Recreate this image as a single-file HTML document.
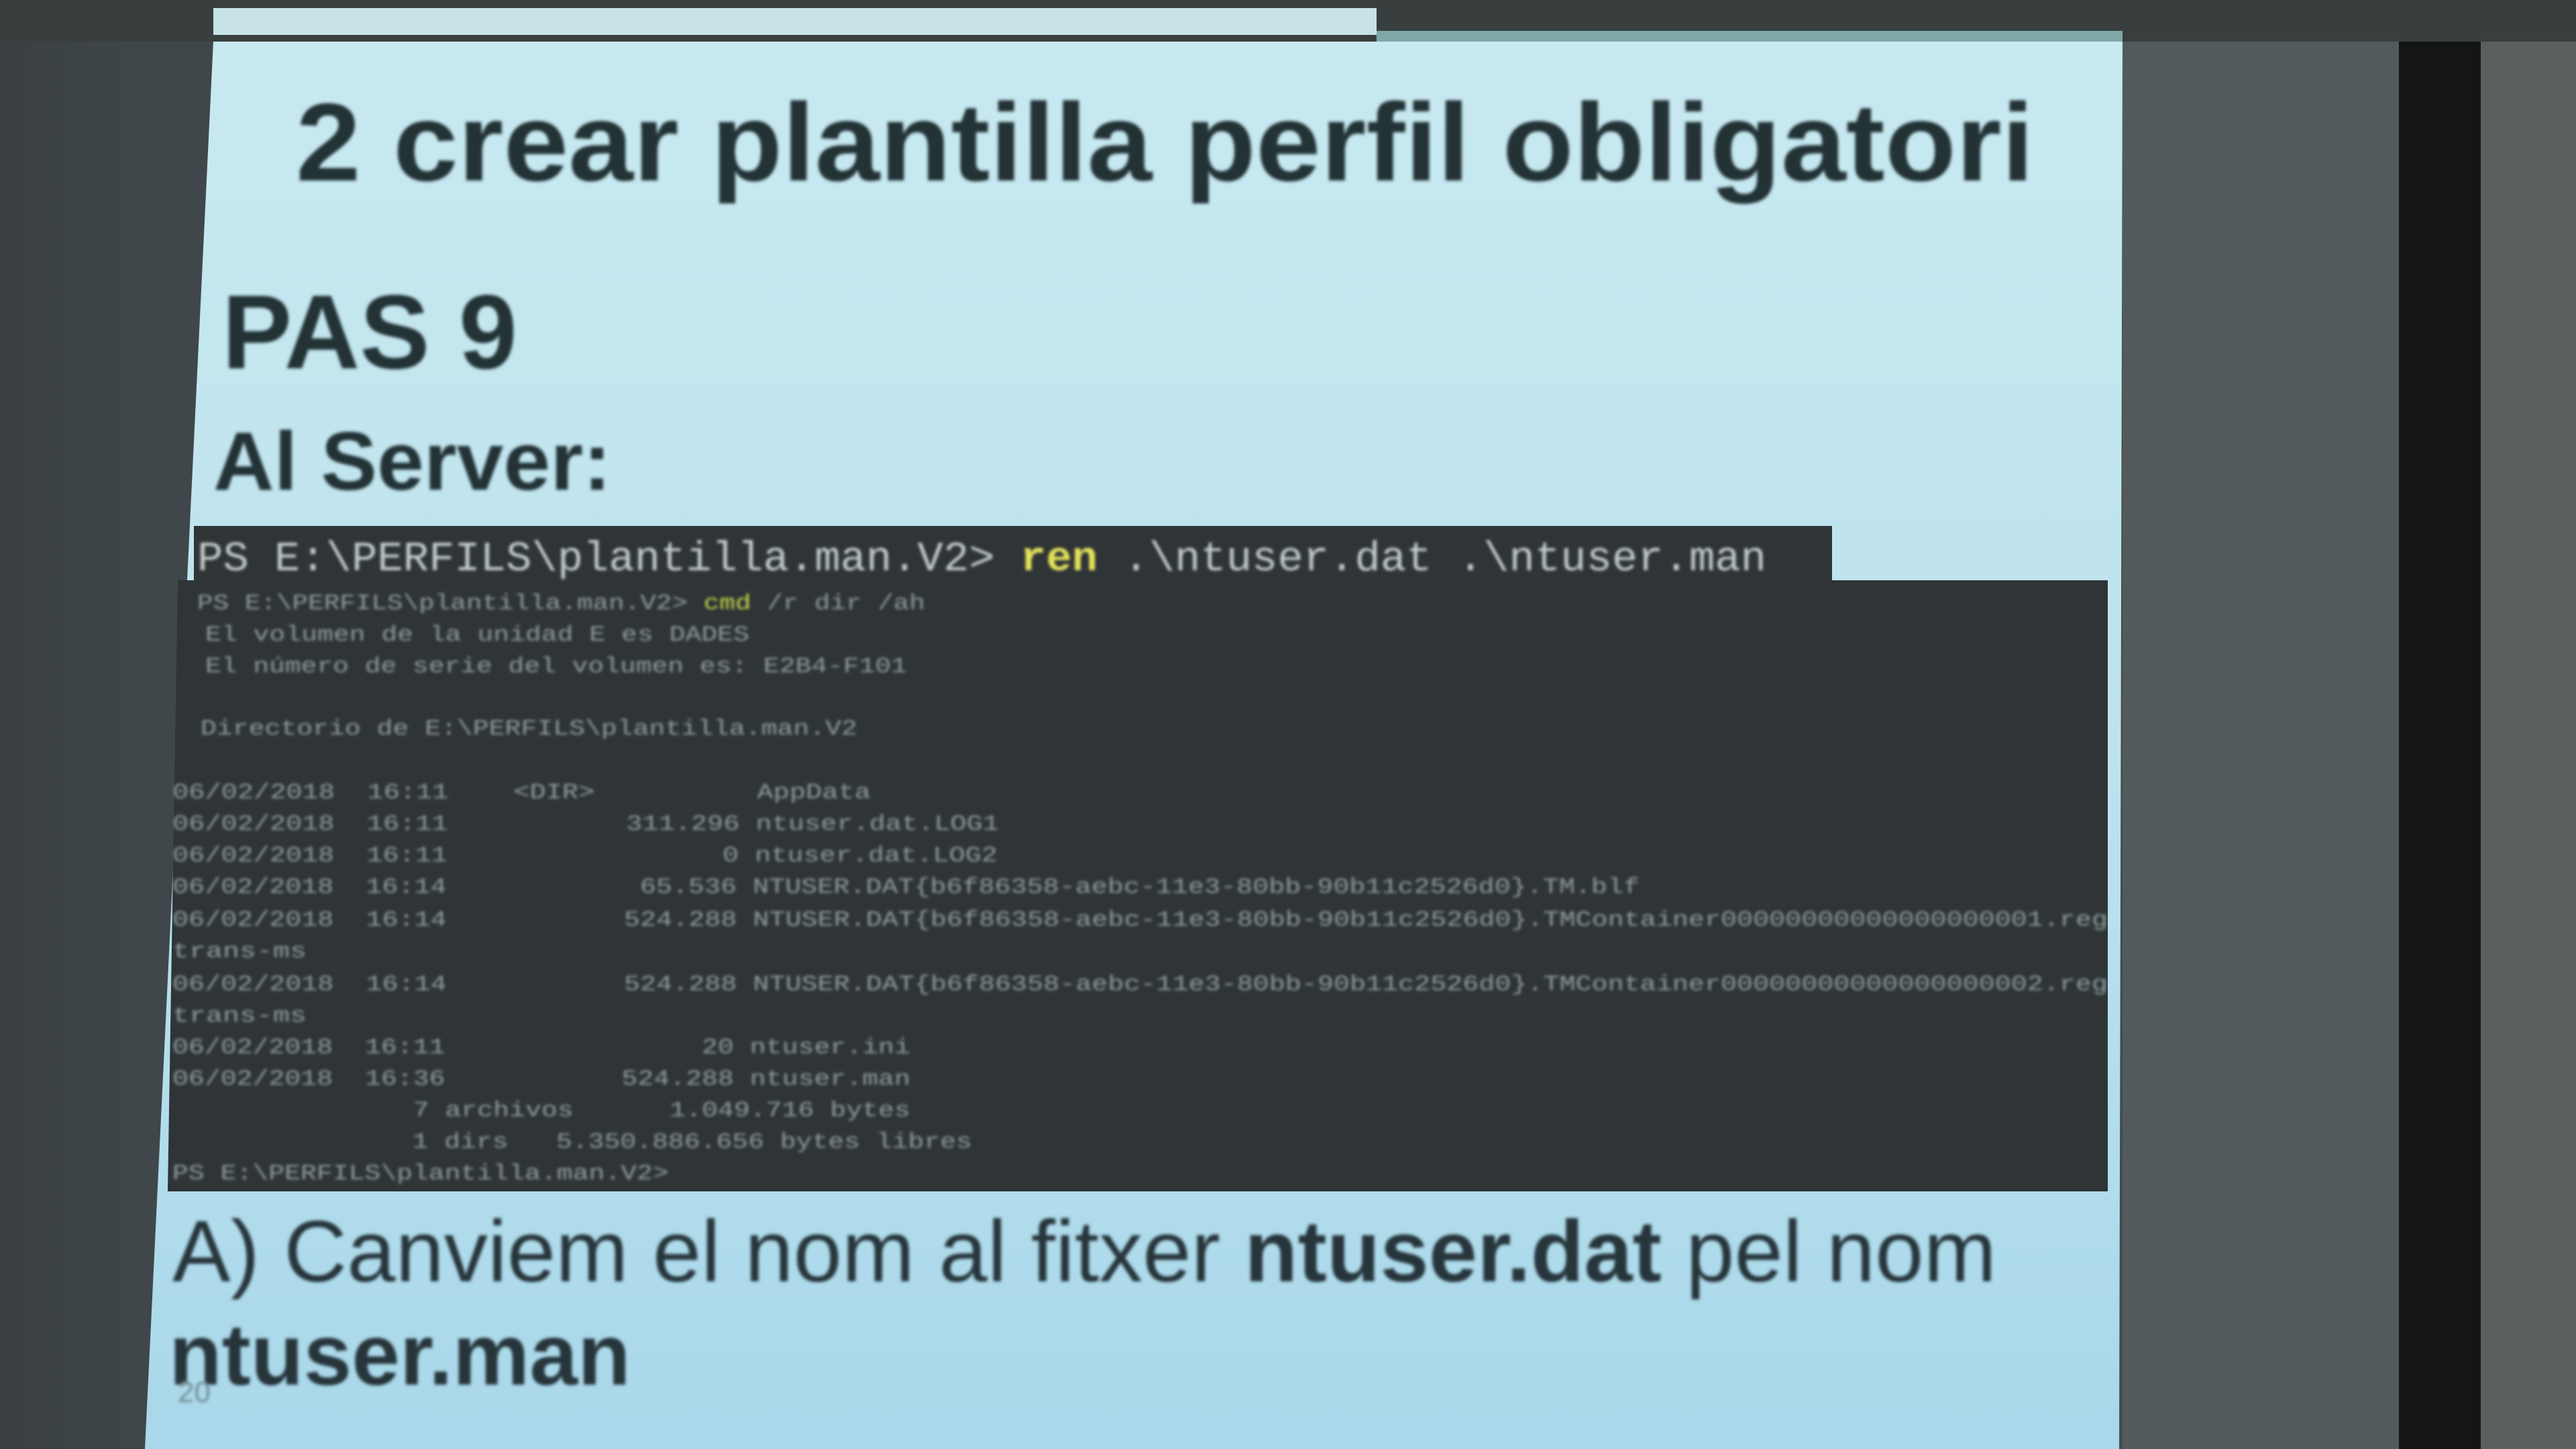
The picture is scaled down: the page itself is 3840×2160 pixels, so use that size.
<!DOCTYPE html>
<html><head><meta charset="utf-8"><style>
html,body{margin:0;padding:0;width:3840px;height:2160px;overflow:hidden;background:#3d4345}
svg{display:block}
text{white-space:pre}
</style></head><body>
<svg width="3840" height="2160" viewBox="0 0 3840 2160" xmlns="http://www.w3.org/2000/svg">
<defs>
<linearGradient id="sl" x1="0" y1="0" x2="0" y2="1">
<stop offset="0" stop-color="#c8e9f0"/><stop offset="0.5" stop-color="#bde2ee"/><stop offset="1" stop-color="#a9d8ea"/>
</linearGradient>
<linearGradient id="bg" x1="0" y1="0" x2="1" y2="0">
<stop offset="0" stop-color="#3a4042"/><stop offset="0.06" stop-color="#40474a"/><stop offset="1" stop-color="#454c4e"/>
</linearGradient>
<filter id="b"><feGaussianBlur stdDeviation="2.5"/></filter>
<filter id="b2"><feGaussianBlur stdDeviation="2"/></filter>
</defs>
<rect width="3840" height="2160" fill="url(#bg)"/>
<rect x="3164" y="0" width="412" height="2160" fill="#535a5c"/>
<rect x="3576" y="40" width="122" height="2120" fill="#141516"/>
<rect x="3698" y="0" width="142" height="2160" fill="#5b605e"/>
<rect x="0" y="0" width="3840" height="62" fill="#393f3f"/>
<rect x="318" y="12" width="1734" height="40" fill="#c7e3e8"/>
<rect x="2052" y="46" width="1112" height="20" fill="#7fa7a8"/>
<polygon points="318,62 3164,62 3159,2160 216,2160" fill="url(#sl)"/>
<g font-family="Liberation Sans, sans-serif" font-weight="bold" fill="#243336" filter="url(#b)">
<text x="441" y="269" font-size="165" textLength="2591" lengthAdjust="spacingAndGlyphs">2 crear plantilla perfil obligatori</text>
<text x="331" y="549" font-size="157" textLength="440" lengthAdjust="spacingAndGlyphs">PAS 9</text>
<text x="318" y="730" font-size="123" textLength="593" lengthAdjust="spacingAndGlyphs">Al Server:</text>
</g>
<rect x="289" y="784" width="2442" height="84" fill="#2f3437"/>
<polygon points="265,865 3142,865 3142,1776 250,1776" fill="#2f3437"/>
<g font-family="Liberation Mono, monospace" filter="url(#b2)">
<text x="294" y="850" font-size="62" fill="#c3cccd" textLength="2339" lengthAdjust="spacingAndGlyphs">PS E:\PERFILS\plantilla.man.V2&gt; <tspan fill="#e5e35a" font-weight="bold">ren</tspan> .\ntuser.dat .\ntuser.man</text>
<g font-size="32" fill="#8e9b9d">
<text x="294" y="908" textLength="1085" lengthAdjust="spacingAndGlyphs">PS E:\PERFILS\plantilla.man.V2&gt; <tspan fill="#c8d84a">cmd</tspan> /r dir /ah</text>
<text x="306" y="955" textLength="811" lengthAdjust="spacingAndGlyphs">El volumen de la unidad E es DADES</text>
<text x="306" y="1002" textLength="1046" lengthAdjust="spacingAndGlyphs">El número de serie del volumen es: E2B4-F101</text>
<text x="299" y="1095" textLength="979" lengthAdjust="spacingAndGlyphs">Directorio de E:\PERFILS\plantilla.man.V2</text>
<text x="257" y="1190" textLength="1041" lengthAdjust="spacingAndGlyphs">06/02/2018  16:11    &lt;DIR&gt;          AppData</text>
<text x="257" y="1237" textLength="1232" lengthAdjust="spacingAndGlyphs">06/02/2018  16:11           311.296 ntuser.dat.LOG1</text>
<text x="257" y="1284" textLength="1230" lengthAdjust="spacingAndGlyphs">06/02/2018  16:11                 0 ntuser.dat.LOG2</text>
<text x="257" y="1331" textLength="2187" lengthAdjust="spacingAndGlyphs">06/02/2018  16:14            65.536 NTUSER.DAT{b6f86358-aebc-11e3-80bb-90b11c2526d0}.TM.blf</text>
<text x="257" y="1380" textLength="2885" lengthAdjust="spacingAndGlyphs">06/02/2018  16:14           524.288 NTUSER.DAT{b6f86358-aebc-11e3-80bb-90b11c2526d0}.TMContainer00000000000000000001.reg</text>
<text x="257" y="1427" textLength="200" lengthAdjust="spacingAndGlyphs">trans-ms</text>
<text x="257" y="1476" textLength="2885" lengthAdjust="spacingAndGlyphs">06/02/2018  16:14           524.288 NTUSER.DAT{b6f86358-aebc-11e3-80bb-90b11c2526d0}.TMContainer00000000000000000002.reg</text>
<text x="257" y="1523" textLength="200" lengthAdjust="spacingAndGlyphs">trans-ms</text>
<text x="257" y="1570" textLength="1100" lengthAdjust="spacingAndGlyphs">06/02/2018  16:11                20 ntuser.ini</text>
<text x="257" y="1617" textLength="1100" lengthAdjust="spacingAndGlyphs">06/02/2018  16:36           524.288 ntuser.man</text>
<text x="257" y="1664" textLength="1100" lengthAdjust="spacingAndGlyphs">               7 archivos      1.049.716 bytes</text>
<text x="257" y="1711" textLength="1192" lengthAdjust="spacingAndGlyphs">               1 dirs   5.350.886.656 bytes libres</text>
<text x="257" y="1758" textLength="740" lengthAdjust="spacingAndGlyphs">PS E:\PERFILS\plantilla.man.V2&gt;</text>
</g>
</g>
<g font-family="Liberation Sans, sans-serif" fill="#27363a" filter="url(#b)">
<text x="257" y="1910" font-size="130" textLength="2719" lengthAdjust="spacingAndGlyphs">A) Canviem el nom al fitxer <tspan font-weight="bold">ntuser.dat</tspan> pel nom</text>
<text x="252" y="2064" font-size="130" font-weight="bold" textLength="688" lengthAdjust="spacingAndGlyphs">ntuser.man</text>
<text x="265" y="2090" font-size="44" fill="#6f8a92">20</text>
</g>
</svg>
</body></html>
